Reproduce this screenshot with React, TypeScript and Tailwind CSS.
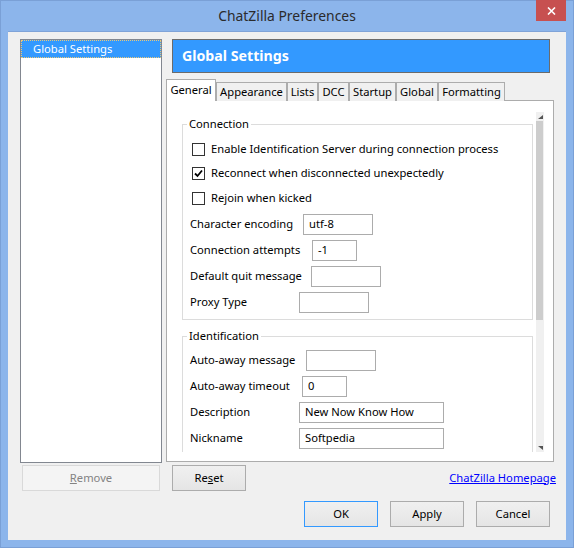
import React from 'react';

const tabs = [
  { label: 'General', w: 'w-[50px]' },
  { label: 'Appearance', w: 'w-[71px]' },
  { label: 'Lists', w: 'w-[31px]' },
  { label: 'DCC', w: 'w-[31px]' },
  { label: 'Startup', w: 'w-[47px]' },
  { label: 'Global', w: 'w-[42px]' },
  { label: 'Formatting', w: 'w-[67px]' },
];

const Checkbox: React.FC<{ checked?: boolean; label: string; h: string }> = ({ checked, label, h }) => (
  <div className={`flex items-center ${h}`}>
    <span className="ml-[2px] w-[13px] h-[13px] border border-[#333] bg-white flex items-center justify-center">
      {checked && (
        <svg width="9" height="9" viewBox="0 0 9 9">
          <path d="M1 4.5 L3.5 7 L8 1.5" fill="none" stroke="#000" strokeWidth="1.8" />
        </svg>
      )}
    </span>
    <span className="ml-[6px]">{label}</span>
  </div>
);

const Field: React.FC<{ label: string; lw: string; iw: string; value?: string }> = ({ label, lw, iw, value }) => (
  <div className="flex items-center h-[26px]">
    <span className={`${lw} shrink-0`}>{label}</span>
    <div className={`${iw} h-[21px] border border-[#acacac] bg-white pl-[5px] flex items-center`}>{value}</div>
  </div>
);

const Button: React.FC<{ children: React.ReactNode; focus?: boolean }> = ({ children, focus }) => (
  <button
    className={`w-[74px] h-[26px] border ${focus ? 'border-[#3399ff]' : 'border-[#acacac]'} bg-gradient-to-b from-[#f0f0f0] to-[#e5e5e5] text-black`}
  >
    {children}
  </button>
);

export default function App() {
  return (
    <div className="w-[574px] h-[548px] bg-[#8cb5eb] border border-[#7aa0d6] flex flex-col font-['Segoe_UI','Noto_Sans',sans-serif] text-[11.2px] text-black">
      <div className="h-[30px] grid grid-cols-[1fr_auto_1fr] shrink-0">
        <div />
        <div className="self-center text-[13.9px] text-[#2b2b2b] pt-[1px]">ChatZilla Preferences</div>
        <div className="justify-self-end self-start mr-[7px] -mt-px w-[30px] h-[21px] bg-[#c75050] flex items-center justify-center">
          <svg width="9" height="8" viewBox="0 0 9 8">
            <path d="M1 0.5 L8 7.5 M8 0.5 L1 7.5" stroke="#fff" strokeWidth="1.6" />
          </svg>
        </div>
      </div>

      <div className="mx-[7px] mb-[7px] flex-1 bg-[#f0f0f0] border-t border-[#7fa3d8] pt-[7px] pl-[12px] pr-[12px] flex flex-col">
        <div className="flex gap-[4px]">
          {/* left list */}
          <div className="w-[142px] h-[424px] border border-[#828790] bg-white">
            <div className="h-[18px] bg-[#3399ff] border border-dotted border-[#e8c87a] text-white pl-[11px] pt-[1px] flex items-center">
              Global Settings
            </div>
          </div>

          {/* right column */}
          <div className="w-[388px] flex flex-col">
            <div className="ml-[6px] mr-[4px] h-[34px] bg-[#3399ff] border border-[#6b6b6b] flex items-center pl-[9px] text-white text-[14.2px] font-bold">
              Global Settings
            </div>
            <div className="mt-[6px] -mb-px flex items-end h-[22px] relative z-10">
              {tabs.map((t, i) =>
                i === 0 ? (
                  <div key={t.label} className={`${t.w} h-[22px] bg-white border border-b-0 border-[#acacac] flex items-center justify-center pb-[1px]`}>
                    {t.label}
                  </div>
                ) : (
                  <div key={t.label} className={`${t.w} h-[19px] bg-[#f0f0f0] border border-b-0 border-[#acacac] flex items-center justify-center`}>
                    {t.label}
                  </div>
                )
              )}
            </div>
            <div className="h-[362px] border border-[#acacac] bg-white pt-[11px] pl-[7px] pr-[9px] pb-[9px]">
              <div className="h-[340px] flex overflow-hidden">
                <div className="flex-1 pt-[4px] pl-[8px] pr-[3px]">
                  <fieldset className="border border-[#dcdcdc] px-[7px] pt-[5px] pb-[4px]">
                    <legend className="-ml-[3px] px-[2px] leading-[16px]">Connection</legend>
                    <Checkbox h="h-[24px]" label="Enable Identification Server during connection process" />
                    <Checkbox h="h-[25px]" checked label="Reconnect when disconnected unexpectedly" />
                    <Checkbox h="h-[25px]" label="Rejoin when kicked" />
                    <Field label="Character encoding" lw="w-[113px]" iw="w-[70px]" value="utf-8" />
                    <Field label="Connection attempts" lw="w-[122px]" iw="w-[45px]" value="-1" />
                    <Field label="Default quit message" lw="w-[121px]" iw="w-[70px]" />
                    <Field label="Proxy Type" lw="w-[109px]" iw="w-[70px]" />
                  </fieldset>
                  <fieldset className="mt-[8px] border border-[#dcdcdc] px-[7px] pt-[3px] pb-[4px]">
                    <legend className="-ml-[3px] px-[2px] leading-[16px]">Identification</legend>
                    <Field label="Auto-away message" lw="w-[116px]" iw="w-[70px]" />
                    <Field label="Auto-away timeout" lw="w-[112px]" iw="w-[45px]" value="0" />
                    <Field label="Description" lw="w-[109px]" iw="w-[145px]" value="New Now Know How" />
                    <Field label="Nickname" lw="w-[109px]" iw="w-[145px]" value="Softpedia" />
                  </fieldset>
                </div>
                {/* scrollbar */}
                <div className="w-[8px] bg-[#f0f0f0] flex flex-col">
                  <div className="h-[9px] flex items-center justify-center">
                    <svg width="5" height="4" viewBox="0 0 5 4">
                      <path d="M0 4 L5 4 L5 0 Z" fill="#555" />
                    </svg>
                  </div>
                  <div className="h-[199px] w-[7px] bg-[#cdcdcd]" />
                  <div className="flex-1" />
                  <div className="h-[9px] flex items-center justify-center">
                    <svg width="5" height="4" viewBox="0 0 5 4">
                      <path d="M0 0 L5 0 L5 4 Z" fill="#555" />
                    </svg>
                  </div>
                </div>
              </div>
            </div>
          </div>
        </div>

        <div className="mt-[2px] flex items-center">
          <button className="ml-[2px] w-[138px] h-[26px] border border-[#d9d9d9] bg-[#f4f4f4] text-[#838383]">
            <span className="underline">R</span>emove
          </button>
          <div className="ml-[12px]">
            <Button>
              Re<span className="underline">s</span>et
            </Button>
          </div>
          <a className="ml-auto mr-[-2px] text-[#0000ff] underline">ChatZilla Homepage</a>
        </div>

        <div className="mt-[10px] flex justify-end gap-[12px] pr-[4px]">
          <Button focus>OK</Button>
          <Button>Apply</Button>
          <Button>Cancel</Button>
        </div>
      </div>
    </div>
  );
}
